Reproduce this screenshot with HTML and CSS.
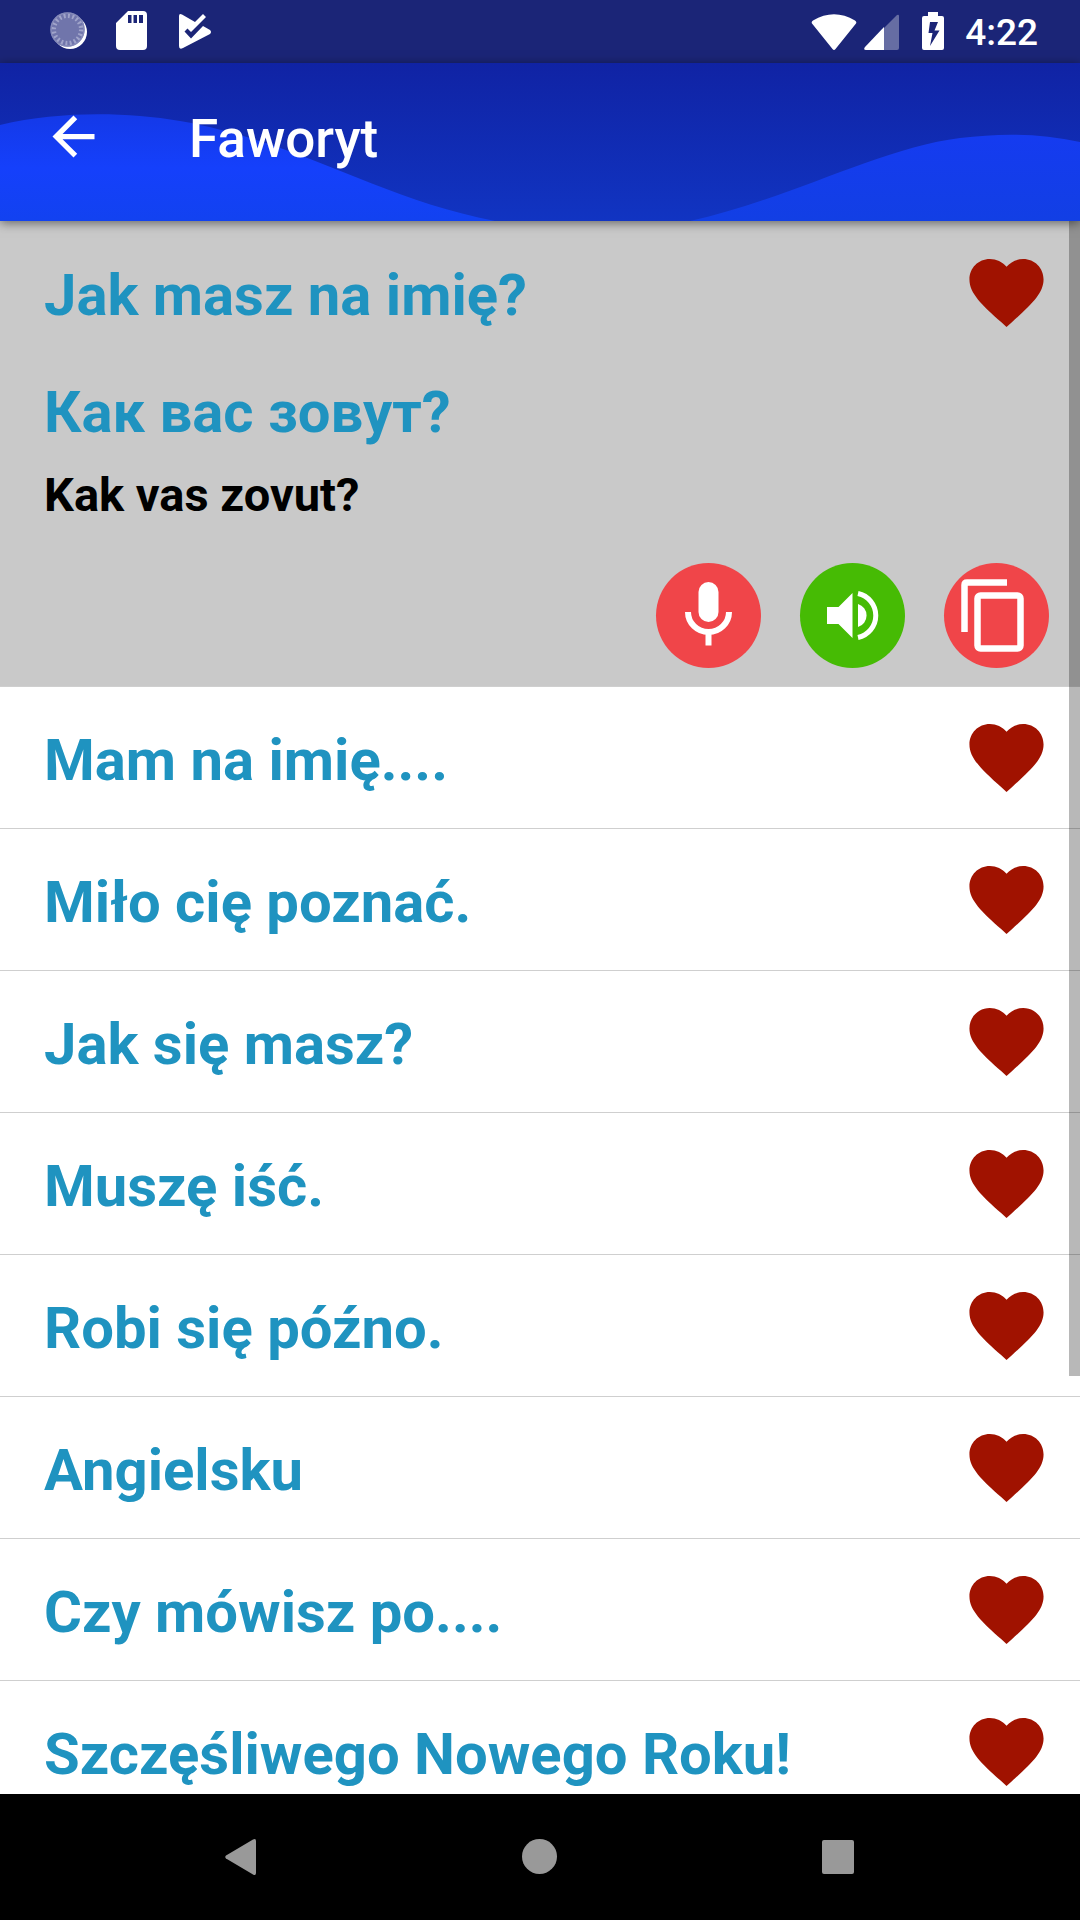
FILE: index.html
```html
<!DOCTYPE html>
<html lang="pl">
<head>
<meta charset="utf-8">
<meta name="viewport" content="width=device-width, initial-scale=1">
<title>Faworyt</title>
<link rel="stylesheet" href="styles.css">
</head>
<body>
<svg class="defs" width="0" height="0" aria-hidden="true">
  <symbol id="heart" viewBox="2 3 20 18.35"><path d="M12 21.35l-1.45-1.32C5.4 15.36 2 12.28 2 8.5 2 5.42 4.42 3 7.5 3c1.74 0 3.41.81 4.5 2.09C13.09 3.81 14.76 3 16.5 3 19.58 3 22 5.42 22 8.5c0 3.78-3.4 6.86-8.55 11.54L12 21.35z"/></symbol>
</svg>
<div class="screen">
  <div class="status">
    <div class="status-left">
      <svg width="38" height="38" viewBox="0 0 38 38">
        <circle cx="20" cy="20" r="17" fill="#fff"/>
        <circle cx="17.500" cy="17.500" r="17" fill="#7075ab"/>
        <circle cx="17.500" cy="17.500" r="14" fill="none" stroke="#a0a4ca" stroke-width="5" stroke-dasharray="2 2.4"/>
        <circle cx="17.500" cy="17.500" r="16.500" fill="none" stroke="#8489b8" stroke-width="1.500"/>
      </svg>
      <svg class="sd" width="31" height="39" viewBox="0 0 31 39"><path fill="#fff" fill-rule="evenodd" d="M12 0H27a4 4 0 0 1 4 4V35a4 4 0 0 1-4 4H4a4 4 0 0 1-4-4V12ZM12 4V12H15.500V4ZM17.500 4V12H21V4ZM23 4V12H27V4Z"/></svg>
      <svg class="play" width="33" height="36" viewBox="0 0 33 36"><path fill="#fff" d="M0 3Q0 0 3 1.500L16 9 24 1 27 4 12 19 8.500 15.500 5.500 18.500 12 25.500 24 13 31 17Q33 19 31 21L4 35Q0 37 0 33Z"/></svg>
    </div>
    <div class="status-right">
      <svg width="46" height="36" viewBox="0 0 46 36"><path fill="#fff" d="M1 9.500Q0 8 2 6.500Q23-6 44 6.500Q46 8 45 9.500L24.500 35Q23 37 21.500 35Z"/></svg>
      <svg width="35" height="36" viewBox="0 0 35 36"><path fill="#666da3" d="M20 14 33 1Q35 0 35 2V34Q35 36 33 36H20Z"/><path fill="#fff" d="M20 13V36H2Q-1 36 1 33Z"/></svg>
      <svg class="battery" width="22" height="38" viewBox="0 0 22 38"><path fill="#fff" fill-rule="evenodd" d="M6 0H16V4H20Q22 4 22 6V36Q22 38 20 38H2Q0 38 0 36V6Q0 4 2 4H6ZM8 10 6.500 21H10.500L8 34 17.500 18.500H12.500L16 10Z"/></svg>
      <span class="time">4:22</span>
    </div>
  </div>

  <header class="appbar">
    <svg class="waves" viewBox="0 0 1080 158" preserveAspectRatio="none" aria-hidden="true">
      <defs>
        <linearGradient id="w1" x1="0" y1="0" x2="0" y2="1"><stop offset="0" stop-color="#1439e8"/><stop offset=".5" stop-color="#1540fb"/><stop offset="1" stop-color="#1242f0"/></linearGradient>
        <linearGradient id="w2" x1="0" y1="0" x2="0" y2="1"><stop offset="0" stop-color="#153bf0"/><stop offset="1" stop-color="#123fe4"/></linearGradient>
      </defs>
      <path fill="url(#w1)" d="M0 62C60 48 125 49 180 58C300 79 380 136 495 158H0Z"/>
      <path fill="url(#w2)" d="M690 158C790 136 880 85 960 75C1000 70 1040 70 1080 79V158Z"/>
    </svg>
    <button class="back" type="button" aria-label="Wstecz">
      <svg width="63" height="63" viewBox="0 0 24 24"><path fill="#fff" d="M20 11H7.830l5.590-5.590L12 4l-8 8 8 8 1.410-1.410L7.830 13H20v-2z"/></svg>
    </button>
    <h1 class="title">Faworyt</h1>
  </header>

  <main class="content">
    <ul class="list">
      <li class="item open">
        <div class="row"><span class="phrase">Jak masz na imię?</span><button class="fav" type="button" aria-label="Ulubione"><svg><use href="#heart"/></svg></button></div>
        <p class="phrase translation" lang="ru">Как вас зовут?</p>
        <p class="reading">Kak vas zovut?</p>
        <div class="actions">
          <button class="round red" type="button" aria-label="Nagraj"><svg viewBox="0 0 105 105"><rect x="42.500" y="19" width="20" height="40" rx="10" fill="#fff"/><path fill="none" stroke="#fff" stroke-width="6" d="M32 49A20.500 20 0 0 0 73 49M52.500 69V82.500"/></svg></button>
          <button class="round green" type="button" aria-label="Odtwórz"><svg viewBox="0 0 105 105"><path fill="#fff" d="M27 44H38.500L52.500 30V75L38.500 61H27ZM58 41A12 12 0 0 1 58 64Z"/><path fill="none" stroke="#fff" stroke-width="5" d="M58 30.500A22.500 22.500 0 0 1 58 74.500"/></svg></button>
          <button class="round red" type="button" aria-label="Kopiuj"><svg viewBox="0 0 105 105"><g fill="none" stroke="#fff" stroke-width="6.500"><path d="M63 19.500H23Q20.500 19.500 20.500 22V69"/><rect x="33.500" y="32.500" width="43" height="53" rx="3"/></g></svg></button>
        </div>
      </li>
      <li class="item"><div class="row"><span class="phrase">Mam na imię....</span><button class="fav" type="button" aria-label="Ulubione"><svg><use href="#heart"/></svg></button></div></li>
      <li class="item"><div class="row"><span class="phrase">Miło cię poznać.</span><button class="fav" type="button" aria-label="Ulubione"><svg><use href="#heart"/></svg></button></div></li>
      <li class="item"><div class="row"><span class="phrase">Jak się masz?</span><button class="fav" type="button" aria-label="Ulubione"><svg><use href="#heart"/></svg></button></div></li>
      <li class="item"><div class="row"><span class="phrase">Muszę iść.</span><button class="fav" type="button" aria-label="Ulubione"><svg><use href="#heart"/></svg></button></div></li>
      <li class="item"><div class="row"><span class="phrase">Robi się późno.</span><button class="fav" type="button" aria-label="Ulubione"><svg><use href="#heart"/></svg></button></div></li>
      <li class="item"><div class="row"><span class="phrase">Angielsku</span><button class="fav" type="button" aria-label="Ulubione"><svg><use href="#heart"/></svg></button></div></li>
      <li class="item"><div class="row"><span class="phrase">Czy mówisz po....</span><button class="fav" type="button" aria-label="Ulubione"><svg><use href="#heart"/></svg></button></div></li>
      <li class="item"><div class="row"><span class="phrase">Szczęśliwego Nowego Roku!</span><button class="fav" type="button" aria-label="Ulubione"><svg><use href="#heart"/></svg></button></div></li>
    </ul>
    <div class="thumb"></div>
  </main>

  <nav class="navbar">
    <button type="button" aria-label="Wstecz"><svg width="36" height="36" viewBox="0 0 36 36"><path fill="#999" d="M3 19.500Q1.500 18 3 16.500L30 .5Q33 -1 33 2V34Q33 37 30 35.500Z"/></svg></button>
    <button type="button" aria-label="Ekran główny"><svg width="36" height="36" viewBox="0 0 36 36"><circle cx="17.500" cy="17.500" r="17.500" fill="#999"/></svg></button>
    <button type="button" aria-label="Ostatnie"><svg width="36" height="36" viewBox="0 0 36 36"><rect x="1" y="1" width="32" height="34" rx="2" fill="#999"/></svg></button>
  </nav>
</div>
</body>
</html>
```
FILE: styles.css
```css
* { box-sizing: border-box; }

body {
  margin: 0;
  font-family: Roboto, "Noto Sans", sans-serif;
  background: #fff;
}

button {
  padding: 0;
  border: 0;
  background: none;
  cursor: pointer;
}

svg { display: block; }

.defs { position: absolute; }

.screen {
  display: flex;
  flex-direction: column;
  height: 100vh;
  overflow: hidden;
}

/* Status bar */
.status {
  display: flex;
  justify-content: space-between;
  flex: none;
  height: 63px;
  padding: 0 42px 13px 50px;
  background: #1b2577;
}

.status-left,
.status-right {
  display: flex;
  align-items: flex-end;
}

.sd { margin: 0 32px 0 28px; }

.play { margin-bottom: 1px; }

.status-right { gap: 7px; }

.battery { margin: 0 14px 0 16px; }

.time {
  color: #fff;
  font-size: 37px;
  font-weight: 500;
  line-height: 34px;
}

/* App bar */
.appbar {
  position: relative;
  z-index: 1;
  display: flex;
  align-items: center;
  gap: 84px;
  flex: none;
  height: 158px;
  padding: 0 42px 12px;
  background: linear-gradient(#1023a4, #1134c2);
  box-shadow: 0 2px 10px rgba(0, 0, 0, .5);
}

.waves {
  position: absolute;
  inset: 0;
  width: 100%;
  height: 100%;
}

.back,
.title { position: relative; }

.title {
  margin: 0;
  padding-top: 5px;
  color: #fff;
  font-size: 53px;
  font-weight: 500;
  line-height: 60px;
}

/* Phrase list */
.content {
  position: relative;
  flex: 1;
  min-height: 0;
  overflow: hidden;
}

.list {
  margin: 0;
  padding: 0;
  list-style: none;
}

.item { border-bottom: 1px solid #cfcfcf; }

.open {
  padding: 1px 0 18px;
  background: #c9c9c9;
}

.row {
  display: flex;
  align-items: center;
  justify-content: space-between;
  height: 141px;
  padding: 0 36px 0 44px;
}

.phrase {
  padding-top: 4px;
  color: #1f93c0;
  font-size: 58px;
  font-weight: 700;
  line-height: 68px;
}

.fav svg {
  width: 75px;
  height: 68px;
  fill: #a01200;
}

.translation {
  margin: 0;
  padding: 15px 44px 0;
}

.reading {
  margin: 0;
  padding: 17px 44px 0;
  color: #000;
  font-size: 47px;
  font-weight: 700;
  line-height: 64px;
}

.actions {
  display: flex;
  justify-content: flex-end;
  gap: 39px;
  padding: 36px 31px 0;
}

.round {
  width: 105px;
  height: 105px;
  border-radius: 50%;
}

.red { background: #f04549; }
.green { background: #46bb04; }

.thumb {
  position: absolute;
  top: 0;
  right: 0;
  width: 11px;
  height: 73.4%;
  background: rgba(0, 0, 0, .28);
}

/* System navigation */
.navbar {
  display: flex;
  justify-content: center;
  flex: none;
  height: 126px;
  background: #000;
}

.navbar button {
  display: flex;
  align-items: center;
  justify-content: center;
  width: 27.7%;
}
```
